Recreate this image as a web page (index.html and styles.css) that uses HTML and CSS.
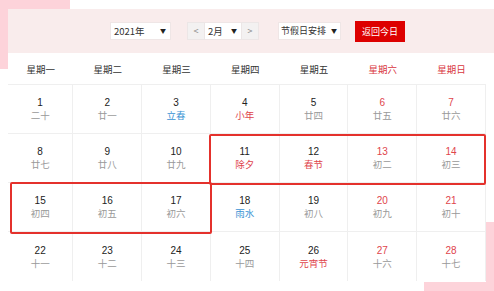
FILE: index.html
```html
<!DOCTYPE html>
<html lang="zh-CN">
<head>
<meta charset="utf-8">
<title>万年历</title>
<link rel="stylesheet" href="styles.css">
</head>
<body>
<div class="page">
  <div class="deco deco-tl"></div>
  <div class="deco deco-br"></div>
  <div class="cal">
    <div class="toolbar">
      <div class="sel sel-year"><span>2021年</span><span class="arr">▼</span></div>
      <div class="month-group">
        <div class="nav">&lt;</div>
        <div class="sel sel-month"><span>2月</span><span class="arr">▼</span></div>
        <div class="nav">&gt;</div>
      </div>
      <div class="sel sel-hol"><span>节假日安排</span><span class="arr">▼</span></div>
      <div class="today-btn">返回今日</div>
    </div>
    <div class="weekdays">
      <div>星期一</div><div>星期二</div><div>星期三</div><div>星期四</div><div>星期五</div><div class="we">星期六</div><div class="we">星期日</div>
    </div>
    <div class="days">
      <div class="cell"><b>1</b><i>二十</i></div>
      <div class="cell"><b>2</b><i>廿一</i></div>
      <div class="cell"><b>3</b><i class="term">立春</i></div>
      <div class="cell"><b>4</b><i class="fest">小年</i></div>
      <div class="cell"><b>5</b><i>廿四</i></div>
      <div class="cell we"><b>6</b><i>廿五</i></div>
      <div class="cell we"><b>7</b><i>廿六</i></div>

      <div class="cell"><b>8</b><i>廿七</i></div>
      <div class="cell"><b>9</b><i>廿八</i></div>
      <div class="cell"><b>10</b><i>廿九</i></div>
      <div class="cell"><b>11</b><i class="fest">除夕</i></div>
      <div class="cell"><b>12</b><i class="fest">春节</i></div>
      <div class="cell we"><b>13</b><i>初二</i></div>
      <div class="cell we"><b>14</b><i>初三</i></div>

      <div class="cell"><b>15</b><i>初四</i></div>
      <div class="cell"><b>16</b><i>初五</i></div>
      <div class="cell"><b>17</b><i>初六</i></div>
      <div class="cell"><b>18</b><i class="term">雨水</i></div>
      <div class="cell"><b>19</b><i>初八</i></div>
      <div class="cell we"><b>20</b><i>初九</i></div>
      <div class="cell we"><b>21</b><i>初十</i></div>

      <div class="cell last"><b>22</b><i>十一</i></div>
      <div class="cell last"><b>23</b><i>十二</i></div>
      <div class="cell last"><b>24</b><i>十三</i></div>
      <div class="cell last"><b>25</b><i>十四</i></div>
      <div class="cell last"><b>26</b><i class="fest">元宵节</i></div>
      <div class="cell last we"><b>27</b><i>十六</i></div>
      <div class="cell last we"><b>28</b><i>十七</i></div>

      <div class="mark mark1"></div>
      <div class="mark mark2"></div>
    </div>
  </div>
</div>
</body>
</html>
```

FILE: styles.css
```css
* { box-sizing: border-box; }
html, body {
  margin: 0;
  padding: 0;
  background: #ffffff;
  overflow: hidden;
}
body {
  font-family: "Noto Sans CJK SC", "Noto Sans", sans-serif;
  color: #333;
}
.page {
  position: relative;
  width: 494px;
  height: 291px;
  overflow: hidden;
}
.deco {
  position: absolute;
  background: #fdd3da;
  z-index: 0;
}
.deco-tl { left: 0; top: 0; width: 70px; height: 69px; }
.deco-br { left: 424px; top: 222px; width: 70px; height: 69px; }

.cal {
  position: relative;
  z-index: 1;
  margin: 9px 0 0 8px;
  width: 478px;
  height: 273px;
  background: #fff;
}
.toolbar {
  width: 486px;
  height: 44px;
  background: #f9ecec;
  display: flex;
  align-items: center;
  padding-left: 102px;
}
.sel {
  height: 18px;
  background: #fff;
  border: 1px solid #efe6e6;
  display: flex;
  align-items: center;
  justify-content: space-between;
  padding: 0 4px 0 3px;
  font-size: 9.5px;
  line-height: 16px;
  color: #333;
}
.arr { font-size: 6px; color: #222; }
.sel-year { width: 61px; }
.month-group {
  display: flex;
  margin-left: 16px;
  height: 18px;
}
.nav {
  width: 18px;
  height: 18px;
  background: #f3f1f1;
  border: 1px solid #ece6e6;
  color: #888;
  font-size: 9px;
  line-height: 16px;
  text-align: center;
}
.sel-month { width: 36px; border-left: none; border-right: none; }
.sel-hol { width: 63px; margin-left: 19px; padding: 0 3px 0 2px; font-size: 9px; }
.today-btn {
  margin-left: 14px;
  width: 50px;
  height: 21px;
  background: #dd0000;
  color: #fff;
  font-size: 9px;
  line-height: 21px;
  text-align: center;
}

.weekdays, .days {
  display: grid;
  grid-template-columns: 65.3px repeat(6, 1fr);
}
.weekdays {
  height: 32px;
  border-bottom: 1px solid #efefef;
}
.weekdays div {
  font-size: 9.5px;
  line-height: 32px;
  text-align: center;
  color: #333;
}
.weekdays .we { color: #d9363e; }

.days { position: relative; }
.cell {
  height: 49px;
  border-right: 1px solid #efefef;
  border-bottom: 1px solid #efefef;
  display: flex;
  flex-direction: column;
  align-items: center;
  justify-content: center;
}
.cell.last { border-bottom: none; }
.cell b {
  font-family: "Liberation Sans", Arial, sans-serif;
  font-weight: normal;
  font-size: 10px;
  line-height: 13px;
  color: #222;
}
.cell i {
  font-style: normal;
  font-size: 9.5px;
  line-height: 13px;
  color: #999;
}
.cell.we b { color: #e0454c; }
.cell i.fest { color: #e0454c; }
.cell i.term { color: #3a93d4; }

.mark {
  position: absolute;
  border: 2px solid #e4312c;
  border-radius: 2px;
}
.mark1 { left: 201px; top: 49px; width: 277px; height: 51px; }
.mark2 { left: 2px; top: 97px; width: 202px; height: 52px; }
```
